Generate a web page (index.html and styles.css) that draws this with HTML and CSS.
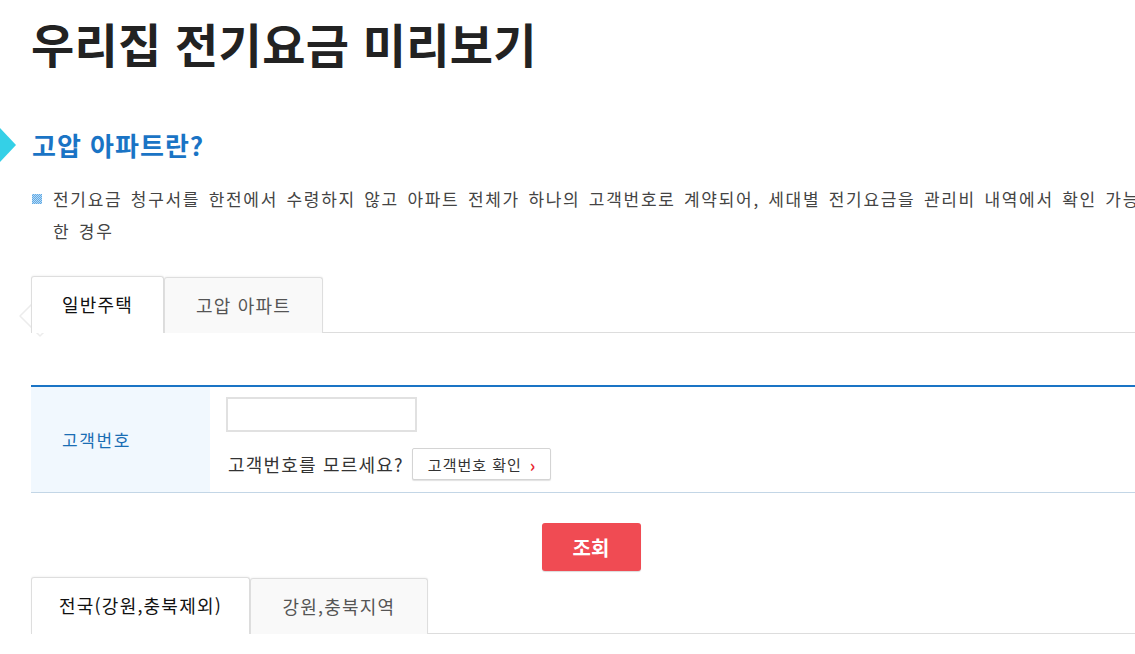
FILE: index.html
```html
<!DOCTYPE html>
<html lang="ko">
<head>
<meta charset="utf-8">
<title>우리집 전기요금 미리보기</title>
<link rel="stylesheet" href="styles.css">
</head>
<body>
<div class="page">
  <h1 class="page-title">우리집 전기요금 미리보기</h1>

  <h2 class="section-title">고압 아파트란?</h2>
  <p class="bullet-text"><span class="bullet"></span>전기요금 청구서를 한전에서 수령하지 않고 아파트 전체가 하나의 고객번호로 계약되어, 세대별 전기요금을 관리비 내역에서 확인 가능한 경우</p>

  <div class="tabs-wrap">
    <svg class="prev-arrow" width="30" height="44" viewBox="0 0 30 44" aria-hidden="true">
      <path d="M22 2 L28 8 L14 22 L28 36 L22 42 L2 22 Z" fill="#ffffff" stroke="#ececec" stroke-width="1.5" stroke-linejoin="round"/>
    </svg>
    <ul class="tabs">
      <li class="tab tab-home active">일반주택</li>
      <li class="tab tab-apt">고압 아파트</li>
    </ul>
  </div>

  <table class="form-table">
    <tr>
      <th>고객번호</th>
      <td>
        <input class="cust-input" type="text" aria-label="고객번호">
        <div class="help-row">
          <span>고객번호를 모르세요?</span>
          <button class="check-btn" type="button">고객번호 확인<span class="chev">›</span></button>
        </div>
      </td>
    </tr>
  </table>

  <div class="submit-row">
    <button class="submit-btn" type="button">조회</button>
  </div>

  <ul class="tabs tabs-region">
    <li class="tab tab-nation active">전국(강원,충북제외)</li>
    <li class="tab tab-gw">강원,충북지역</li>
  </ul>
</div>
</body>
</html>
```

FILE: styles.css
```css
html, body {
  margin: 0;
  padding: 0;
  background: #ffffff;
  overflow-x: hidden;
}

body {
  font-family: "Noto Sans CJK KR", "Noto Sans", sans-serif;
  color: #444;
}

.page {
  width: 1119px;
  padding-left: 31px;
}

.page-title {
  margin: 13px 0 0;
  font-size: 47px;
  line-height: 60px;
  font-weight: bold;
  color: #222;
  letter-spacing: 0.3px;
}

.section-title {
  display: flex;
  align-items: center;
  gap: 16px;
  margin: 55px 0 0 -31px;
  font-size: 26px;
  line-height: 34px;
  font-weight: bold;
  color: #1a74c5;
  letter-spacing: 1px;
}

.section-title::before {
  content: "";
  width: 0;
  height: 0;
  border-top: 17px solid transparent;
  border-bottom: 17px solid transparent;
  border-left: 16px solid #34d0e7;
}

.bullet-text {
  position: relative;
  margin: 21px 0 0;
  padding-left: 22px;
  font-size: 17px;
  line-height: 32px;
  color: #444;
  letter-spacing: 1.7px;
  word-spacing: 2px;
  word-break: break-all;
}

.bullet {
  position: absolute;
  left: 1px;
  top: 11px;
  width: 10px;
  height: 10px;
  background: repeating-conic-gradient(#5fa9e6 0 25%, #b7daf4 0 50%) 0 0 / 2px 2px;
}

.tabs-wrap {
  position: relative;
  margin-top: 29px;
}

.prev-arrow {
  position: absolute;
  left: -13px;
  top: 18px;
}

.tabs {
  display: flex;
  list-style: none;
  margin: 0;
  padding: 0;
  border-bottom: 1px solid #dddddd;
}

.tab {
  position: relative;
  margin-bottom: -1px;
  height: 56px;
  box-sizing: border-box;
  border: 1px solid #dedede;
  border-bottom: none;
  border-radius: 3px 3px 0 0;
  background: #f9f9f9;
  font-size: 18px;
  line-height: 54px;
  letter-spacing: 1.2px;
  text-align: center;
  color: #555;
  box-shadow: 0 -1px 2px rgba(0, 0, 0, 0.04);
}

.tab.active {
  background: #ffffff;
  color: #111;
  height: 57px;
}

.tab-home { width: 133px; }
.tab-apt { width: 159px; margin-top: 1px; }
.tab-nation { width: 219px; }
.tab-gw { width: 178px; margin-top: 1px; }

.form-table {
  width: 100%;
  margin-top: 52px;
  border-collapse: collapse;
  border-top: 2px solid #1a74c5;
  border-bottom: 1px solid #c3d6e6;
}

.form-table th {
  width: 148px;
  padding: 0 0 0 31px;
  background: #f1f8fe;
  font-size: 17px;
  font-weight: normal;
  letter-spacing: 1.6px;
  text-align: left;
  color: #1a6eb4;
}

.form-table td {
  padding: 10px 16px 12px;
  vertical-align: top;
}

.cust-input {
  display: block;
  width: 191px;
  height: 35px;
  box-sizing: border-box;
  border: 2px solid #e1e1e1;
  margin: 0;
  padding: 0 6px;
  font-size: 15px;
}

.help-row {
  display: flex;
  align-items: center;
  gap: 8px;
  margin-top: 16px;
  margin-left: 2px;
  font-size: 18px;
  letter-spacing: 1.2px;
  color: #333;
}

.check-btn {
  height: 32px;
  width: 139px;
  box-sizing: border-box;
  padding: 0 0 0 15px;
  border: 1px solid #d4d4d4;
  border-radius: 2px;
  background: #ffffff;
  box-shadow: 0 1px 1px rgba(0, 0, 0, 0.12);
  font-family: inherit;
  font-size: 15px;
  letter-spacing: 1px;
  color: #333;
  text-align: left;
  display: flex;
  align-items: center;
}

.chev {
  margin-left: 8px;
  color: #e8262f;
  font-weight: bold;
  font-size: 17px;
  line-height: 1;
}

.submit-row {
  display: flex;
  justify-content: center;
  margin-top: 30px;
  width: 1120px;
}

.submit-btn {
  width: 99px;
  height: 48px;
  border: none;
  border-radius: 3px;
  background: #f04b53;
  box-shadow: 0 1px 1px rgba(0, 0, 0, 0.15);
  color: #ffffff;
  font-family: inherit;
  font-size: 20px;
  font-weight: bold;
}

.tabs-region {
  margin-top: 6px;
}
```
